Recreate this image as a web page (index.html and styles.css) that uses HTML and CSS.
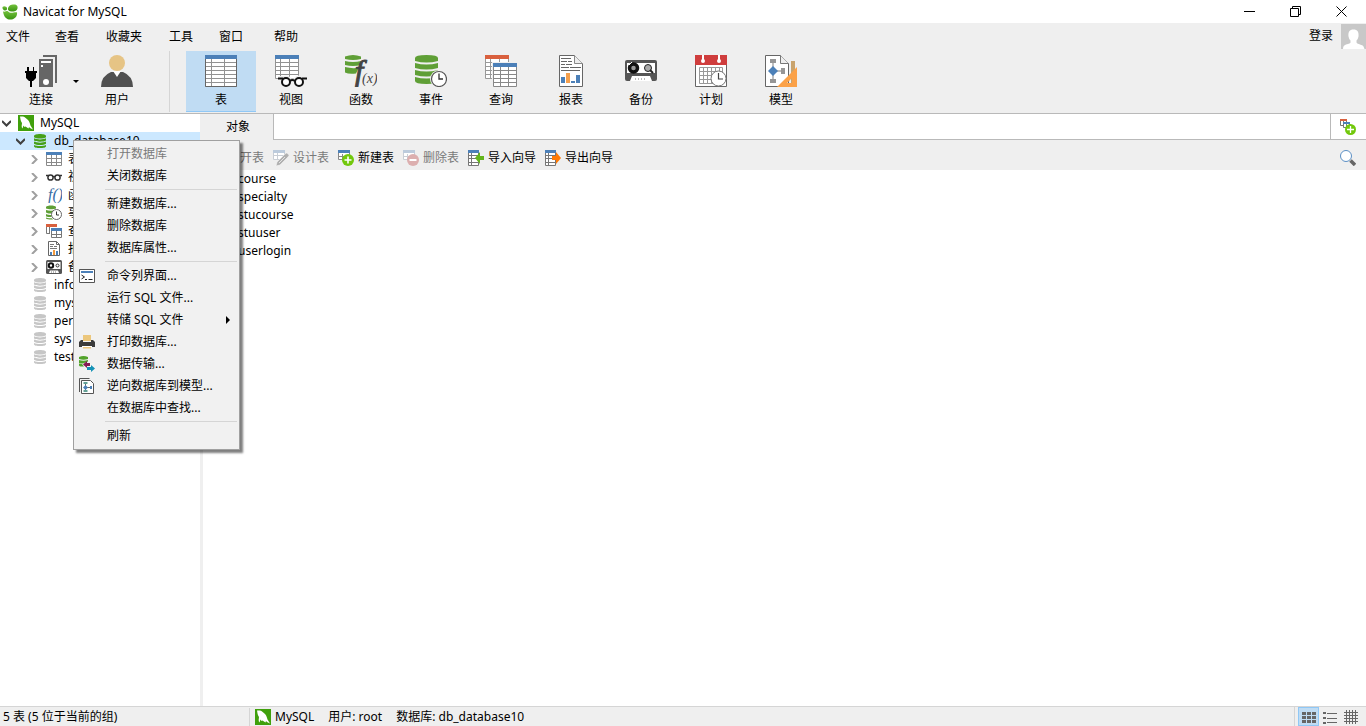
FILE: index.html
```html
<!DOCTYPE html>
<html lang="zh-CN">
<head>
<meta charset="utf-8">
<title>Navicat for MySQL</title>
<link rel="stylesheet" href="styles.css">
</head>
<body>
<svg class="sprite" aria-hidden="true">
  <defs>
    <linearGradient id="leaf" x1="0" y1="0" x2="0" y2="1"><stop offset="0" stop-color="#74c23c"/><stop offset="1" stop-color="#3a9412"/></linearGradient>
  </defs>
  <symbol id="i-app" viewBox="0 0 16 16"><g fill="url(#leaf)"><path d="M6 4C7 1 10 0 12 .5c3 0 4 2 3.500 4-.5 2.500-3 3-6 3C7 7.500 5.500 6 6 4z"/><path d="M.5 3C2 1.500 4.500 2.500 5 4c.5 1.500-.5 2.500-2 2.500S0 4.500.5 3z"/><path d="M1 7.500c2 .5 3-.5 4.500-.5 2 2 4 2 6 1.500 1.500 0 3-.5 3.500 0 .5 3-1.500 6.500-5.500 7-4 .5-7.500-1.500-8.500-8z"/></g></symbol>
  <symbol id="i-mysql" viewBox="0 0 16 16"><path fill="#40a00c" d="M0 0h16v16H0z"/><path fill="#fff" d="M2 1.500h3c2 .5 3.500 2 5 3.500 1.500 1.500 2 4 2.500 5.500l2.500 4-3-1.500-1-1-.5 1.500-1.500-1-1.500-1-1 .5-1-1.500-1 3C3 12 4 9.500 4 8 2.500 6 2.500 4 2 1.500z"/></symbol>
  <symbol id="i-db" viewBox="0 0 16 16"><g fill="currentColor"><path d="M2 3c0-2.700 12-2.700 12 0v1.300C12 5.900 4 5.900 2 4.300z"/><path d="M2 5.300c3 1.500 9 1.500 12 0v2.200c-2 1.600-10 1.600-12 0z"/><path d="M2 8.600c3 1.500 9 1.500 12 0v2.200c-2 1.600-10 1.600-12 0z"/><path d="M2 11.900c3 1.500 9 1.500 12 0v1.300c0 2.500-12 2.500-12 0z"/></g></symbol>
  <symbol id="i-table" viewBox="0 0 16 16"><path fill="#fff" d="M.5 1.500h15v13H.5z"/><path fill="none" stroke="#8a8a8a" d="M.5 4v10.500h15V4M.5 7.500h15M.5 11.500h15M5.500 4v10.500M10.500 4v10.500"/><path fill="#4c80b8" d="M0 1h16v3H0z"/></symbol>
  <symbol id="i-glasses" viewBox="0 0 16 16"><g fill="none" stroke="#333" stroke-width="1.500"><circle cx="4.500" cy="8.500" r="2.600"/><circle cx="11.500" cy="8.500" r="2.600"/><path d="M7 8q1-1 2 0M0 6.500h2.500M13.500 6.500H16"/></g></symbol>
  <symbol id="i-clock" viewBox="0 0 16 16"><g fill="#5f9f36"><path d="M0 2c1-2 9-2 10 0v1.500C8 4.500 2 4.500 0 3.500zM0 5c3 1 7 1 10 0v2l-4 1.500c-2 0-5 0-6-1zM0 9c1 .8 4 1 5.500 1v2c-2 0-4.500 0-5.500-.8zM0 12.500c2 .8 4 .8 6 .8l1 1.200c-2 .3-6 0-7-1z"/></g><circle cx="10.500" cy="9.500" r="5" fill="#fff" stroke="#666"/><path d="M10.500 6.500v3.500H13" fill="none" stroke="#333"/></symbol>
  <symbol id="i-query" viewBox="0 0 16 16"><path d="M.5 1.500h10v9H.5zM3.500 4v6" fill="#fff" stroke="#777"/><path d="M0 1h11v3H0z" fill="#d9603e"/><path d="M4 4h12v11H4z" fill="#fff"/><path d="M5.500 5.500h10v9h-10zM5.500 11.500h10M10.500 8v7" fill="#fff" stroke="#777"/><path d="M5 5h11v3H5z" fill="#4c80b8"/></symbol>
  <symbol id="i-report" viewBox="0 0 16 16"><path d="M2.500.5h8l3 3v11h-11zM10.500.5v3h3" fill="#fff" stroke="#666"/><path d="M4 3.500h4M4 5.500h3M8 5.500h3M4 7.500h7" stroke="#777"/><path fill="#4c80b8" d="M4 11h2v3H4z"/><path fill="#f19a3e" d="M7 9h2v5H7z"/><path fill="#4c80b8" d="M10 10h2v4h-2z"/></symbol>
  <symbol id="i-tape" viewBox="0 0 16 16"><rect y="1" width="16" height="14" rx="1.500" fill="#555"/><path fill="#fff" d="M1.500 3h13v7h-13zM4 11.500h8l1 2.500H3z"/><circle cx="5" cy="6.500" r="2.200" fill="#fff" stroke="#111" stroke-width="2"/><circle cx="11.500" cy="6.500" r="1.500" fill="#fff" stroke="#333"/><path d="M5 13h6" stroke="#777" stroke-dasharray="1 1"/></symbol>
  <symbol id="i-plusbadge" viewBox="0 0 16 16"><path d="M.5 1.500h11v8H.5zM0 6.500h11M4.500 4v5" fill="#fff" stroke="#888"/><path d="M0 0h12v3H0z" fill="#4c80b8"/><circle cx="10" cy="10" r="6" fill="#72c80c"/><path d="M10 6.500v7M6.500 10h7" stroke="#fff" stroke-width="1.600"/></symbol>
  <symbol id="i-newquery" viewBox="0 0 16 16"><path d="M.5 1.500h6v5H.5zM3.500 2v4" fill="#fff" stroke="#777"/><path d="M0 0h7v2H0z" fill="#d9603e"/><path d="M3.500 4.500h6v4h-6zM6.500 5v4" fill="#fff" stroke="#777"/><path d="M3 3h7v2H3z" fill="#4c80b8"/><circle cx="10.500" cy="10.500" r="5.500" fill="#72c80c"/><path d="M10.500 7v7M7 10.500h7" stroke="#fff" stroke-width="1.300"/></symbol>
  <symbol id="i-minusbadge" viewBox="0 0 16 16"><path d="M.5 1.500h11v8H.5zM0 6.500h11M4.500 4v5" fill="#fff" stroke="#c9ced5"/><path d="M0 0h12v3H0z" fill="#bccbdc"/><circle cx="10" cy="10" r="6" fill="#dcafaf"/><path d="M6.500 10h7" stroke="#fff" stroke-width="2"/></symbol>
  <symbol id="i-design" viewBox="0 0 16 16"><path d="M.5 1.500h11v8H.5zM0 5.500h11M4.500 3v7" fill="#fff" stroke="#c9ced5"/><path d="M0 0h12v3H0z" fill="#bccbdc"/><path d="M3 16l1-4 8-8q2-2 3 0 2 1 0 3l-8 8z" fill="#b0b0b0" stroke="#fff" stroke-width=".5"/><path d="M6 13l6-6" stroke="#e4e4e4"/></symbol>
  <symbol id="i-import" viewBox="0 0 16 16"><path d="M.5 1.500h10v14H.5zM0 5.500h10M0 8.500h10M0 12.500h10M3.500 3v13" fill="#fff" stroke="#777"/><path d="M0 0h11v3H0z" fill="#4c80b8"/><path d="M7 8l5-6v4h4v4h-4v4z" fill="#64b51b"/></symbol>
  <symbol id="i-export" viewBox="0 0 16 16"><path d="M.5 1.500h10v14H.5zM0 5.500h10M0 8.500h10M0 12.500h10M3.500 3v13" fill="#fff" stroke="#777"/><path d="M0 0h11v3H0z" fill="#4c80b8"/><path d="M16 8l-5-6v4H7v4h4v4z" fill="#ff7a05"/></symbol>
  <symbol id="i-search" viewBox="0 0 16 16"><path d="M10.500 10.500l4.500 4.500" stroke="#666" stroke-width="3.500"/><circle cx="6" cy="6" r="5.500" fill="#fff" stroke="#5b8fc4"/></symbol>
  <symbol id="i-console" viewBox="0 0 16 16"><path d="M.5 1.500h15v13H.5z" fill="#fff" stroke="#555"/><path d="M2 3h12v2H2z" fill="#4c80b8"/><path d="M2.500 7l3 2-3 2M6 11.500h2M9.500 11.500h4" fill="none" stroke="#222"/></symbol>
  <symbol id="i-printer" viewBox="0 0 16 16"><path d="M4 1h8v6H4z" fill="#ecc77c"/><path d="M2 6h2v2h8V6h2l2 2v5H0V8z" fill="#3b3b3b"/><path d="M4 13h8v1.500H4z" fill="#ecc77c"/><path d="M3 12.500h10" stroke="#fff"/></symbol>
  <symbol id="i-transfer" viewBox="0 0 16 16"><path d="M0 1q4.500-2 9 0v2q-4.500 1.500-9 0zM0 4q4.500 1.500 9 0v1.500L4 7.500H0zM0 8h3L5 10.500H1l-1-1z" fill="#52a32b"/><path d="M4 8.500l4-3.500v2h3v3H8v2z" fill="#861b55"/><path d="M16 12.500l-4-3.500v2H8v3h4v2z" fill="#1592b6"/></symbol>
  <symbol id="i-reverse" viewBox="0 0 16 16"><path d="M.5 14V.500h10" fill="none" stroke="#555"/><path d="M2.500 2.500h9l3 3v10h-12z" fill="#fff" stroke="#555"/><path d="M6.500 5.500V13M6 9.500h6" stroke="#666"/><path d="M4.500 4h4v2h-4zM4.500 12h4v2h-4z" fill="#62a095"/><path d="M6.500 7L9 9.500 6.500 12 4 9.500zM11 8h2v3h-2z" fill="#4c80b8"/></symbol>
  <symbol id="b-connect" viewBox="0 0 32 32"><path d="M18 1h13v27" fill="none" stroke="#666" stroke-width="2"/><path d="M14 4h14v28H14z" fill="#666"/><path d="M16 7h10M16 11h2" stroke="#fff" stroke-width="2"/><circle cx="21" cy="27" r="3" fill="#fff"/><path d="M2 12h2v4h4v-4h1v4h3v2h-1v5l-3 3H7v6H5v-6H4l-3-3v-5H0v-2h2z" fill="#000"/></symbol>
  <symbol id="b-user" viewBox="0 0 32 32"><path d="M0 32q0-11 10-15h12q10 4 10 15z" fill="#505050"/><path d="M12 16h8l-4 6z" fill="#fff"/><circle cx="16" cy="8" r="8" fill="#e6c485"/></symbol>
  <symbol id="b-table" viewBox="0 0 32 32"><path d="M.5.5h31v31H.5zM0 7.500h32M0 11.500h32M0 15.500h32M0 19.500h32M0 23.500h32M0 27.500h32M6.500 4v28M19.500 4v28" fill="#fff" stroke="#929292"/><path d="M.5 4v27.500h31V4" fill="none" stroke="#666"/><path d="M0 0h32v4H0z" fill="#4c80b8"/></symbol>
  <symbol id="b-view" viewBox="0 0 32 32"><path d="M.5.5h23v23H.5zM0 7.500h24M0 11.500h24M0 15.500h24M0 19.500h24M5.500 4v20M14.500 4v20" fill="#fff" stroke="#929292"/><path d="M0 0h24v4H0z" fill="#4c80b8"/><g fill="#efefef" stroke="#efefef" stroke-width="5"><circle cx="11" cy="27" r="4"/><circle cx="24" cy="27" r="4"/><path d="M3 23.500h5M26 23.500h6M15 26h4"/></g><g fill="#fff" stroke="#111" stroke-width="2"><circle cx="11" cy="27" r="4"/><circle cx="24" cy="27" r="4"/><path d="M3 23.500h5M27 23.500h5M15 26q2-2 5 0"/></g></symbol>
  <symbol id="b-event" viewBox="0 0 32 32"><g fill="#5f9f36"><path d="M0 3q0-3 11.500-3T23 3v3q-11.500 3-23 0zM0 8q11.500 3 23 0v5q-11.500 3-23 0zM0 15q11.500 3 23 0v5q-11.500 3-23 0zM0 22q11.500 3 23 0v4q0 3-11.500 3T0 26z"/></g><circle cx="24" cy="24" r="9" fill="#efefef"/><circle cx="24" cy="24" r="7.500" fill="#fff" stroke="#555" stroke-width="1.200"/><path d="M24 18.500V24h4" fill="none" stroke="#333" stroke-width="1.300"/></symbol>
  <symbol id="b-query" viewBox="0 0 32 32"><path d="M.5.5h23v23H.5zM0 7.500h24M0 11.500h24M0 15.500h24M0 19.500h24M5.500 4v20M14.500 4v20" fill="#fff" stroke="#999"/><path d="M0 0h24v4H0z" fill="#d9603e"/><path d="M7 7h25v25H7z" fill="#efefef"/><path d="M8.500 8.500h23v23h-23zM8 15.500h24M8 19.500h24M8 23.500h24M8 27.500h24M15.500 12v20M23.500 12v20" fill="#fff" stroke="#888"/><path d="M8 8h24v4H8z" fill="#4c80b8"/></symbol>
  <symbol id="b-report" viewBox="0 0 32 32"><path d="M4.500.5h15l8 8v23h-23z" fill="#fff" stroke="#666"/><path d="M19.500.5v8h8" fill="#eee" stroke="#888"/><path d="M6 3.500h10M6 6.500h6M13 6.500h4M6 9.500h4M11 9.500h6M6 12.500h8M15 12.500h11M6 15.500h19" stroke="#666"/><path d="M6 22h4v6H6zM16 26h4v2h-4zM21 20h4v8h-4z" fill="#4c80b8"/><path d="M11 18h4v10h-4z" fill="#f5a04d"/></symbol>
  <symbol id="b-backup" viewBox="0 0 32 32"><rect y="5" width="32" height="21" rx="2" fill="#555"/><path d="M2 8h28v10H2z" fill="#fff"/><circle cx="8.500" cy="13" r="4" fill="#999" stroke="#111" stroke-width="3.500"/><path d="M4 10l3-3" stroke="#fff"/><circle cx="23" cy="13" r="3.500" fill="#aaa" stroke="#222"/><path d="M25 15l3 3" stroke="#222" stroke-width="2"/><path d="M7 21h18l2 5H5z" fill="#fff"/><path d="M10 24h12" stroke="#777" stroke-dasharray="1 2"/></symbol>
  <symbol id="b-plan" viewBox="0 0 32 32"><path d="M.5.500h31v31H.5z" fill="#fff" stroke="#666"/><path d="M0 0h32v10H0z" fill="#cf3d3d"/><path d="M8 0v6M24 0v6" stroke="#fff" stroke-width="2"/><circle cx="8" cy="6" r="2" fill="#fff"/><circle cx="24" cy="6" r="2" fill="#fff"/><path d="M4.500 12.500h23v16h-23zM4 16.500h24M4 20.500h24M4 24.500h24M8.500 12v17M12.500 12v17M16.500 12v17M20.500 12v17M24.500 12v17" fill="none" stroke="#999"/><circle cx="23.500" cy="23.500" r="7.500" fill="#fff" stroke="#777"/><path d="M23.500 18v6H28" fill="none" stroke="#444" stroke-width="1.200"/></symbol>
  <symbol id="b-model" viewBox="0 0 32 32"><path d="M.5.500h15l8 8v23H.5z" fill="#fff" stroke="#666"/><path d="M15.500.500v8h8" fill="#eee" stroke="#777"/><path d="M8 6v20M8 16h10" stroke="#aaa" stroke-width="1.500"/><path d="M5 4h6v4H5zM5 24h6v4H5zM16 13h4v6h-4z" fill="#969696"/><path d="M8 11l5 5-5 5-5-5z" fill="#4c80b8"/><path d="M26 6h4v24h-4z" fill="#c9a36c"/><path d="M32 12v20H12zM27 23l-5 5h5z" fill="#fba147" fill-rule="evenodd"/></symbol>
  <symbol id="i-avatar" viewBox="0 0 25 25"><path fill="#c8c8c8" d="M0 0h25v25H0z"/><path fill="#fff" d="M12.500 5.500c4 0 5.500 2.500 5 7-.5 2-1 3-2 4v2c1 2 6 2 7 4l1 2.500H2c0-3 1-3.500 3-4.500 3-1 4.500-1 4.500-2v-2c-1-1-1.500-2-2-4-.5-4.500 1-7 5-7z"/></symbol>
</svg>

<header class="titlebar">
  <svg class="icon"><use href="#i-app"/></svg>
  <h1>Navicat for MySQL</h1>
  <div class="window-controls">
    <button aria-label="最小化"><svg viewBox="0 0 11 11"><path d="M0 5.500h11"/></svg></button>
    <button aria-label="还原"><svg viewBox="0 0 11 11"><path d="M.5 2.500h8v8h-8zM2.500 2.500v-2h8v8h-2"/></svg></button>
    <button aria-label="关闭"><svg viewBox="0 0 11 11"><path d="M.5.500l10 10M10.500.500l-10 10"/></svg></button>
  </div>
</header>

<nav class="menubar">
  <div class="menus"><button>文件</button><button>查看</button><button>收藏夹</button><button>工具</button><button>窗口</button><button>帮助</button></div>
  <button class="login"><span>登录</span><svg><use href="#i-avatar"/></svg></button>
</nav>

<div class="toolbar" role="toolbar">
  <div class="group">
    <button class="tool split"><svg><use href="#b-connect"/></svg>连接</button>
    <button class="drop" aria-label="连接选项"></button>
    <button class="tool"><svg><use href="#b-user"/></svg>用户</button>
  </div>
  <div class="group main">
    <button class="tool active"><svg><use href="#b-table"/></svg>表</button>
    <button class="tool"><svg><use href="#b-view"/></svg>视图</button>
    <button class="tool"><svg viewBox="0 0 32 32"><path fill="#5f9f36" d="M0 1.500q8-3 16 0v2.500q-8 2-16 0zM0 6q8 2 16 0v4q-8 2-16 0zM0 12q8 2 14 .5l-3 6q-7 1-11-1z"/><text x="10" y="26" class="fx-f">f</text><text x="17" y="28" class="fx-x">(x)</text></svg>函数</button>
    <button class="tool"><svg><use href="#b-event"/></svg>事件</button>
    <button class="tool"><svg><use href="#b-query"/></svg>查询</button>
    <button class="tool"><svg><use href="#b-report"/></svg>报表</button>
    <button class="tool"><svg><use href="#b-backup"/></svg>备份</button>
    <button class="tool"><svg><use href="#b-plan"/></svg>计划</button>
    <button class="tool"><svg><use href="#b-model"/></svg>模型</button>
  </div>
</div>

<div class="workspace">
  <aside class="sidebar">
    <ul class="tree">
      <li class="root"><svg class="chevron open" viewBox="0 0 9 9"><path d="M0 2l4.500 4.500L9 2"/></svg><svg class="icon"><use href="#i-mysql"/></svg>MySQL</li>
      <li class="database selected"><svg class="chevron open" viewBox="0 0 9 9"><path d="M0 2l4.500 4.500L9 2"/></svg><svg class="icon on"><use href="#i-db"/></svg>db_database10</li>
      <li class="folder"><svg class="chevron" viewBox="0 0 9 9"><path d="M2 0l4.500 4.500L2 9"/></svg><svg class="icon"><use href="#i-table"/></svg>表</li>
      <li class="folder"><svg class="chevron" viewBox="0 0 9 9"><path d="M2 0l4.500 4.500L2 9"/></svg><svg class="icon"><use href="#i-glasses"/></svg>视图</li>
      <li class="folder"><svg class="chevron" viewBox="0 0 9 9"><path d="M2 0l4.500 4.500L2 9"/></svg><svg class="icon" viewBox="0 0 16 16"><text x="2" y="13" class="fx-small">f()</text></svg>函数</li>
      <li class="folder"><svg class="chevron" viewBox="0 0 9 9"><path d="M2 0l4.500 4.500L2 9"/></svg><svg class="icon"><use href="#i-clock"/></svg>事件</li>
      <li class="folder"><svg class="chevron" viewBox="0 0 9 9"><path d="M2 0l4.500 4.500L2 9"/></svg><svg class="icon"><use href="#i-query"/></svg>查询</li>
      <li class="folder"><svg class="chevron" viewBox="0 0 9 9"><path d="M2 0l4.500 4.500L2 9"/></svg><svg class="icon"><use href="#i-report"/></svg>报表</li>
      <li class="folder"><svg class="chevron" viewBox="0 0 9 9"><path d="M2 0l4.500 4.500L2 9"/></svg><svg class="icon"><use href="#i-tape"/></svg>备份</li>
      <li class="closed"><svg class="icon off"><use href="#i-db"/></svg>info</li>
      <li class="closed"><svg class="icon off"><use href="#i-db"/></svg>mysql</li>
      <li class="closed"><svg class="icon off"><use href="#i-db"/></svg>perf</li>
      <li class="closed"><svg class="icon off"><use href="#i-db"/></svg>sys</li>
      <li class="closed"><svg class="icon off"><use href="#i-db"/></svg>test</li>
    </ul>
  </aside>

  <main class="content">
    <div class="tabs">
      <button class="tab">对象</button>
      <div class="tab-space"></div>
      <button class="new-query" aria-label="新建查询"><svg class="icon"><use href="#i-newquery"/></svg></button>
    </div>
    <div class="actions" role="toolbar">
      <button disabled><svg class="icon"><use href="#i-table"/></svg>打开表</button>
      <button disabled><svg class="icon"><use href="#i-design"/></svg>设计表</button>
      <button><svg class="icon"><use href="#i-plusbadge"/></svg>新建表</button>
      <button disabled><svg class="icon"><use href="#i-minusbadge"/></svg>删除表</button>
      <button><svg class="icon"><use href="#i-import"/></svg>导入向导</button>
      <button><svg class="icon"><use href="#i-export"/></svg>导出向导</button>
      <button class="search" aria-label="搜索"><svg class="icon"><use href="#i-search"/></svg></button>
    </div>
    <ul class="objects">
      <li><svg class="icon"><use href="#i-table"/></svg>course</li>
      <li><svg class="icon"><use href="#i-table"/></svg>specialty</li>
      <li><svg class="icon"><use href="#i-table"/></svg>stucourse</li>
      <li><svg class="icon"><use href="#i-table"/></svg>stuuser</li>
      <li><svg class="icon"><use href="#i-table"/></svg>userlogin</li>
    </ul>
  </main>

  <div class="context-menu" role="menu">
    <button role="menuitem" disabled><span>打开数据库</span></button>
    <button role="menuitem"><span>关闭数据库</span></button>
    <hr>
    <button role="menuitem"><span>新建数据库...</span></button>
    <button role="menuitem"><span>删除数据库</span></button>
    <button role="menuitem"><span>数据库属性...</span></button>
    <hr>
    <button role="menuitem"><svg class="icon"><use href="#i-console"/></svg><span>命令列界面...</span></button>
    <button role="menuitem"><span>运行 SQL 文件...</span></button>
    <button role="menuitem" class="submenu"><span>转储 SQL 文件</span></button>
    <button role="menuitem"><svg class="icon"><use href="#i-printer"/></svg><span>打印数据库...</span></button>
    <button role="menuitem"><svg class="icon"><use href="#i-transfer"/></svg><span>数据传输...</span></button>
    <button role="menuitem"><svg class="icon"><use href="#i-reverse"/></svg><span>逆向数据库到模型...</span></button>
    <button role="menuitem"><span>在数据库中查找...</span></button>
    <hr>
    <button role="menuitem"><span>刷新</span></button>
  </div>
</div>

<footer class="statusbar">
  <div class="count">5 表 (5 位于当前的组)</div>
  <div class="connection"><svg class="icon"><use href="#i-mysql"/></svg><span>MySQL</span><span>用户: root</span><span>数据库: db_database10</span></div>
  <div class="view-modes">
    <button class="active" aria-label="列表"><svg viewBox="0 0 14 14"><path d="M0 3.500h4M5 3.500h4M10 3.500h4M0 7.500h4M5 7.500h4M10 7.500h4M0 11.500h4M5 11.500h4M10 11.500h4" stroke-width="3"/></svg></button>
    <button aria-label="详细信息"><svg viewBox="0 0 14 14"><path d="M0 3h3M0 8h3M0 13h3" stroke-width="2"/><path d="M4 3.500h10M4 8.500h10M4 12.500h10"/></svg></button>
    <button aria-label="ER 图表"><svg viewBox="0 0 14 14"><path d="M2.500 0v14M5.500 0v14M8.500 0v14M11.500 0v14M0 2.500h14M0 5.500h14M0 8.500h14M0 11.500h14"/></svg></button>
  </div>
</footer>
</body>
</html>
```
FILE: styles.css
```css
* { box-sizing: border-box; }
body {
  margin: 0;
  height: 100vh;
  display: flex;
  flex-direction: column;
  overflow: hidden;
  background: #fff;
  color: #000;
  font: 12px/18px "Noto Sans", "Noto Sans CJK SC", sans-serif;
}
button { border: 0; padding: 0; margin: 0; background: none; color: inherit; font: inherit; white-space: nowrap; }
button:disabled { color: #7a7a7a; }
ul { list-style: none; margin: 0; padding: 0; }
.sprite { position: absolute; width: 0; height: 0; }
.icon { width: 16px; height: 16px; flex: none; }
.fx-small { font: italic 16px "Liberation Serif", serif; fill: #386ca5; }
.fx-f { font: italic 30px "Liberation Serif", serif; fill: #444; stroke: #444; }
.fx-x { font: italic 14px "Liberation Serif", serif; fill: #444; }

.titlebar { display: flex; align-items: center; height: 23px; padding-left: 2px; gap: 5px; flex: none; }
.titlebar h1 { margin: 0; font-size: 12px; font-weight: 400; }
.window-controls { display: flex; margin-left: auto; padding-right: 2px; }
.window-controls button { width: 46px; height: 20px; display: grid; place-items: center; }
.window-controls svg { width: 11px; height: 11px; fill: none; stroke: #000; }

.menubar { display: flex; height: 26px; background: #efefef; flex: none; }
.menus { display: grid; grid-template-columns: 49px 51px 63px 50px 55px 50px; padding: 2px 0 0 6px; }
.menus button { text-align: left; }
.login { display: flex; align-items: center; gap: 8px; margin-left: auto; }
.login svg { width: 25px; height: 25px; }

.toolbar { display: flex; padding: 2px 0 1px; background: #efefef; border-bottom: 1px solid #b9b9b9; flex: none; }
.group { display: flex; padding-left: 12px; }
.group.main { padding-left: 16px; margin-left: 17px; border-left: 1px solid #d5d5d5; }
.tool { width: 70px; height: 61px; display: flex; flex-direction: column; align-items: center; padding-top: 4px; gap: 4px; }
.tool.split { width: 58px; }
.tool svg { width: 32px; height: 32px; }
.tool.active { background: #c0dcf3; border-bottom: 1px solid #90c8f6; }
.drop { width: 12px; display: grid; place-items: center; }
.drop::before { content: ""; border: 3px solid transparent; border-top-color: #000; border-bottom: 0; }

.workspace { position: relative; display: flex; flex: 1; min-height: 0; }
.sidebar { width: 203px; border-right: 3px solid #efefef; flex: none; overflow: hidden; }
.tree li { display: flex; align-items: center; height: 18px; gap: 7px; white-space: nowrap; }
.tree .icon { margin-right: -1px; }
.tree .root { padding-left: 2px; }
.tree .database { padding-left: 16px; }
.tree .folder { padding-left: 30px; }
.tree .closed { padding-left: 32px; }
.tree .selected { background: #cce8ff; }
.chevron { width: 9px; height: 9px; flex: none; fill: none; stroke: #a0a0a0; stroke-width: 2; }
.chevron.open { stroke: #404040; }
.on { color: #46a01a; }
.off { color: #c6c6c6; }

.content { flex: 1; min-width: 0; }
.tabs { display: flex; height: 26px; }
.tab { width: 71px; background: #efefef; border-right: 1px solid #b9b9b9; }
.tab-space { flex: 1; border-bottom: 1px solid #b9b9b9; }
.new-query { width: 36px; display: grid; place-items: center; padding-right: 2px; border-left: 1px solid #b9b9b9; border-bottom: 1px solid #b9b9b9; }
.actions { display: flex; align-items: center; gap: 9px; height: 30px; padding: 5px 10px 0 5px; background: #efefef; }
.actions button { display: flex; align-items: center; gap: 4px; }
.actions .search { margin-left: auto; }
.objects li { display: flex; align-items: center; gap: 4px; height: 18px; padding-left: 15px; }

.context-menu {
  position: absolute;
  left: 73px;
  top: 26px;
  width: 167px;
  padding: 2px;
  background: #f1f1f1;
  border: 1px solid #a0a0a0;
  box-shadow: 3px 3px 2px rgba(0, 0, 0, .5);
}
.context-menu button { display: grid; grid-template-columns: 28px 1fr 11px; align-items: center; width: 100%; height: 22px; padding-left: 3px; text-align: left; }
.context-menu span { grid-column: 2; }
.context-menu .submenu::after { content: ""; grid-column: 3; justify-self: start; border: 4px solid transparent; border-left-color: #000; border-right: 0; }
.context-menu hr { height: 1px; border: 0; margin: 2px 0 3px 29px; background: #d5d5d5; }

.statusbar { display: flex; align-items: center; height: 20px; background: #efefef; border-top: 1px solid #d5d5d5; flex: none; }
.count { width: 250px; padding-left: 3px; border-right: 1px solid #d5d5d5; }
.connection { display: flex; align-items: center; padding-left: 5px; gap: 14px; }
.connection .icon { margin-right: -10px; }
.view-modes { display: flex; margin-left: auto; padding: 0 5px 0 3px; border-left: 1px solid #d5d5d5; }
.view-modes button { width: 21px; height: 19px; display: grid; place-items: center; }
.view-modes .active { background: #c0dcf3; border: 1px solid #90c8f6; }
.view-modes svg { width: 14px; height: 14px; fill: none; stroke: #666; }
```
